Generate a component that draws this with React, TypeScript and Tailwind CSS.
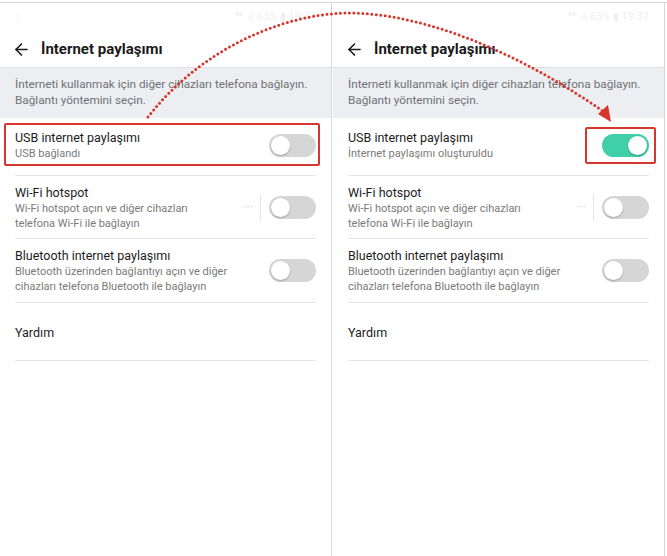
import { ArrowLeft } from "lucide-react"

const font = { fontFamily: "Roboto, 'Noto Sans', sans-serif" }

function Toggle({ on = false }: { on?: boolean }) {
  return (
    <div
      className={`flex h-[23px] w-[47px] shrink-0 items-center rounded-full px-[2px] ${
        on ? "justify-end bg-[#3fcfa9]" : "justify-start bg-[#d6d6d6]"
      }`}
    >
      <div className="h-[19px] w-[19px] rounded-full bg-white shadow-[0_1px_2px_rgba(0,0,0,0.25)]" />
    </div>
  )
}

function Row({
  title,
  lines,
  on,
  dots,
  className = "",
  children,
}: {
  title: string
  lines: string[]
  on?: boolean
  dots?: boolean
  className?: string
  children?: React.ReactNode
}) {
  return (
    <div className={`relative flex items-center border-b border-[#e4e4e4] ${className}`}>
      {children}
      <div className="flex-1">
        <div className="text-[12.5px] leading-[17px] text-[#1c1c1c]">{title}</div>
        {lines.map((l) => (
          <div key={l} className="text-[11px] leading-[15.5px] text-[#7a7a7a]">
            {l}
          </div>
        ))}
      </div>
      {dots && (
        <div className="mr-[8px] flex items-center">
          <span className="text-[10px] tracking-[1px] text-[#c4c4c4]">···</span>
          <div className="ml-[6px] h-[27px] w-px bg-[#e6e6e6]" />
        </div>
      )}
      <Toggle on={on} />
    </div>
  )
}

function Panel({ right }: { right?: boolean }) {
  return (
    <div className="flex h-full w-[332px] shrink-0 flex-col border-r border-[#d8d8d8] bg-white">
      <div className="flex h-[28px] items-center justify-between px-[15px] text-[11px] text-[#f0f0f0]">
        <span>↑</span>
        <span>⁸⁸ .ıl 63% ▮ 19:37</span>
      </div>
      <div className="flex h-[37px] items-center border-b border-[#dcdee2] pl-[12px]">
        <ArrowLeft size={19} strokeWidth={2} className="text-[#1a1a1a]" />
        <span className="ml-[10px] text-[15px] font-bold text-[#1a1a1a]">İnternet paylaşımı</span>
      </div>
      <div className="h-[50px] bg-[#eceef1] px-[15px] pt-[8px] text-[11.75px] leading-[16px] text-[#6f7276]">
        <div>İnterneti kullanmak için diğer cihazları telefona bağlayın.</div>
        <div>Bağlantı yöntemini seçin.</div>
      </div>
      <div className="px-[15px]">
        <Row
          title="USB internet paylaşımı"
          lines={[right ? "İnternet paylaşımı oluşturuldu" : "USB bağlandı"]}
          on={right}
          className="pt-[11px] pb-[13px]"
        >
          {right ? (
            <div className="absolute top-[9px] right-[-7px] h-[37px] w-[71px] rounded-[2px] border-2 border-solid border-[#d5362f]" />
          ) : (
            <div className="absolute top-[5px] right-[-4px] left-[-11px] h-[43px] rounded-[2px] border-2 border-solid border-[#d5362f]" />
          )}
        </Row>
        <Row
          title="Wi-Fi hotspot"
          lines={["Wi-Fi hotspot açın ve diğer cihazları", "telefona Wi-Fi ile bağlayın"]}
          dots
          className="pt-[8px] pb-[6px]"
        />
        <Row
          title="Bluetooth internet paylaşımı"
          lines={["Bluetooth üzerinden bağlantıyı açın ve diğer", "cihazları telefona Bluetooth ile bağlayın"]}
          className="pt-[8px] pb-[7px]"
        />
        <div className="h-[58px] border-b border-[#e4e4e4] pt-[21px] text-[12.5px] leading-[17px] text-[#1c1c1c]">
          Yardım
        </div>
      </div>
    </div>
  )
}

export default function App() {
  return (
    <div className="relative h-[556px] w-[667px] overflow-hidden bg-white" style={font}>
      <div className="mt-[2px] flex h-[554px] gap-px border-t border-[#d3d6da]">
        <Panel />
        <Panel right />
      </div>
      <svg className="pointer-events-none absolute inset-0" width="667" height="556" viewBox="0 0 667 556">
        <path
          d="M148 117 C 200 50, 280 15, 345 13 C 430 12, 530 60, 604 112"
          fill="none"
          stroke="#d6352c"
          strokeWidth="3"
          strokeLinecap="round"
          strokeDasharray="0 4.5"
        />
        <polygon points="611,122 598,114 608,105" fill="#d6352c" />
      </svg>
    </div>
  )
}
